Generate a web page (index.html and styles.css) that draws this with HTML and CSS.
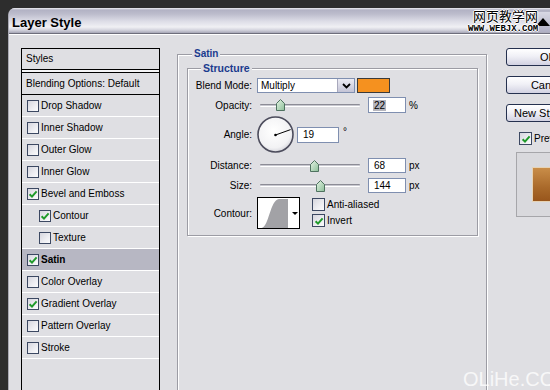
FILE: index.html
```html
<!DOCTYPE html>
<html>
<head>
<meta charset="utf-8">
<title>Layer Style</title>
<link rel="stylesheet" href="styles.css">
</head>
<body>
<div class="screen">
  <div class="window">
    <div class="titlebar"><span class="title">Layer Style</span></div>
    <div class="content">
      <div class="sidebar">
        <div class="side-head">Styles</div>
        <div class="side-blend">Blending Options: Default</div>
        <div class="side-item"><span class="cb"></span>Drop Shadow</div>
        <div class="side-item"><span class="cb"></span>Inner Shadow</div>
        <div class="side-item"><span class="cb"></span>Outer Glow</div>
        <div class="side-item"><span class="cb"></span>Inner Glow</div>
        <div class="side-item"><span class="cb"><svg viewBox="0 0 10 10" width="10" height="10"><path d="M1.6 5.2 L4 7.6 L8.6 2.4" fill="none" stroke="#1f9a2a" stroke-width="2"/></svg></span>Bevel and Emboss</div>
        <div class="side-item sub"><span class="cb"><svg viewBox="0 0 10 10" width="10" height="10"><path d="M1.6 5.2 L4 7.6 L8.6 2.4" fill="none" stroke="#1f9a2a" stroke-width="2"/></svg></span>Contour</div>
        <div class="side-item sub"><span class="cb"></span>Texture</div>
        <div class="side-item active"><span class="cb"><svg viewBox="0 0 10 10" width="10" height="10"><path d="M1.6 5.2 L4 7.6 L8.6 2.4" fill="none" stroke="#1f9a2a" stroke-width="2"/></svg></span>Satin</div>
        <div class="side-item"><span class="cb"></span>Color Overlay</div>
        <div class="side-item"><span class="cb"><svg viewBox="0 0 10 10" width="10" height="10"><path d="M1.6 5.2 L4 7.6 L8.6 2.4" fill="none" stroke="#1f9a2a" stroke-width="2"/></svg></span>Gradient Overlay</div>
        <div class="side-item"><span class="cb"></span>Pattern Overlay</div>
        <div class="side-item"><span class="cb"></span>Stroke</div>
      </div>

      <div class="main">
        <div class="group outer">
          <div class="group-title outer-title">Satin</div>
          <div class="group inner">
            <div class="group-title inner-title">Structure</div>
            <div class="form">
              <div class="row row-blend">
                <span class="lbl">Blend Mode:</span>
                <div class="select"><span class="select-text">Multiply</span><span class="select-btn"><svg viewBox="0 0 9 6" width="9" height="6"><path d="M1 1 L4.5 4.5 L8 1" fill="none" stroke="#000" stroke-width="1.8"/></svg></span></div>
                <span class="swatch"></span>
              </div>
              <div class="row row-opacity">
                <span class="lbl">Opacity:</span>
                <div class="slider"><span class="track"></span><svg class="thumb" style="left:19px" viewBox="0 0 9 12" width="9" height="12"><defs><linearGradient id="g1" x1="0" y1="0" x2="1" y2="1"><stop offset="0" stop-color="#e6f4e6"/><stop offset="1" stop-color="#8cbf98"/></linearGradient></defs><path d="M0.5 4.5 L4.5 0.5 L8.5 4.5 L8.5 11.5 L0.5 11.5 Z" fill="url(#g1)" stroke="#4f7260"/></svg></div>
                <span class="field w38"><span class="sel">22</span></span>
                <span class="unit">%</span>
              </div>
              <div class="row row-angle">
                <span class="lbl">Angle:</span>
                <svg class="dial" viewBox="0 0 37 37" width="37" height="37"><defs><radialGradient id="dg" cx="0.45" cy="0.4" r="0.6"><stop offset="0" stop-color="#ffffff"/><stop offset="0.8" stop-color="#f2f2f4"/><stop offset="1" stop-color="#d8d8de"/></radialGradient></defs><circle cx="18.5" cy="18.5" r="17.5" fill="url(#dg)" stroke="#4c4c5c" stroke-width="1.6"/><line x1="18.5" y1="19" x2="33.6" y2="13.6" stroke="#000" stroke-width="1"/><circle cx="18.5" cy="19" r="1.3" fill="#000"/></svg>
                <span class="field w42">19</span>
                <span class="unit deg">°</span>
              </div>
              <div class="row row-distance">
                <span class="lbl">Distance:</span>
                <div class="slider"><span class="track"></span><svg class="thumb" style="left:53px" viewBox="0 0 9 12" width="9" height="12"><path d="M0.5 4.5 L4.5 0.5 L8.5 4.5 L8.5 11.5 L0.5 11.5 Z" fill="url(#g1)" stroke="#4f7260"/></svg></div>
                <span class="field w38 h15">68</span>
                <span class="unit">px</span>
              </div>
              <div class="row row-size">
                <span class="lbl">Size:</span>
                <div class="slider"><span class="track"></span><svg class="thumb" style="left:59px" viewBox="0 0 9 12" width="9" height="12"><path d="M0.5 4.5 L4.5 0.5 L8.5 4.5 L8.5 11.5 L0.5 11.5 Z" fill="url(#g1)" stroke="#4f7260"/></svg></div>
                <span class="field w38 h15">144</span>
                <span class="unit">px</span>
              </div>
              <div class="row row-contour">
                <span class="lbl lbl-contour">Contour:</span>
                <div class="contour">
                  <svg viewBox="0 0 30 30" width="30" height="30"><path d="M3.5 30 C11 29 12 2 21 1 L30 1 L30 30 Z" fill="#a2a2a6"/></svg>
                  <span class="contour-arrow"></span>
                </div>
                <div class="checks">
                  <div class="check"><span class="cb cb13"></span>Anti-aliased</div>
                  <div class="check"><span class="cb cb13"><svg viewBox="0 0 10 10" width="10" height="10"><path d="M1.6 5.2 L4 7.6 L8.6 2.4" fill="none" stroke="#1f9a2a" stroke-width="2"/></svg></span>Invert</div>
                </div>
              </div>
            </div>
          </div>
        </div>
      </div>

      <div class="actions">
        <div class="btn">OK</div>
        <div class="btn">Cancel</div>
        <div class="btn btn-new">New Style...</div>
        <div class="check preview-check"><span class="cb cb13"><svg viewBox="0 0 10 10" width="10" height="10"><path d="M1.6 5.2 L4 7.6 L8.6 2.4" fill="none" stroke="#1f9a2a" stroke-width="2"/></svg></span>Preview</div>
        <div class="preview"><span class="preview-swatch"></span></div>
      </div>
    </div>
  </div>

  <div class="wm-arrow"><span class="tri"></span></div>
  <div class="wm-cn">网页教学网</div>
  <div class="wm-url">WWW.WEBJX.COM</div>
  <div class="wm-bottom">OLiHe.COM</div>
</div>
</body>
</html>
```

FILE: styles.css
```css
* { box-sizing: border-box; }
html, body { margin: 0; padding: 0; }
body {
  width: 550px;
  height: 390px;
  overflow: hidden;
  background: #2d2d2d;
  font-family: "Liberation Sans", Arial, sans-serif;
  font-size: 10px;
  color: #000;
}
.screen {
  position: relative;
  width: 550px;
  height: 390px;
  padding: 8px 0 0 8px;
}
.window {
  width: 570px;
  height: 400px;
  background: #dfdfe3;
  border-left: 1px solid #a9a9b4;
  border-top-left-radius: 7px;
  overflow: hidden;
  display: flex;
  flex-direction: column;
}
.titlebar {
  flex: none;
  height: 26px;
  border-bottom: 1px solid #6e6e7c;
  box-shadow: 0 1px 0 #ffffff;
  background: linear-gradient(to bottom, #eeeef2 0px, #b2b2c4 2px, #bcbccc 6px, #dcdce6 13px, #f0f0f4 19px, #d4d4de 22px, #a6a6b6 25px);
  padding: 3px 0 0 3px;
  display: flex;
  align-items: center;
}
.title {
  font-weight: bold;
  font-size: 13px;
}
.content {
  flex: 1;
  display: flex;
  padding: 13px 0 0 12px;
}

/* sidebar */
.sidebar {
  flex: none;
  width: 139px;
  margin-top: 1px;
  border: 1px solid #000;
  border-bottom: 0;
}
.side-head {
  height: 21px;
  line-height: 20px;
  padding-left: 4px;
  border-bottom: 1px solid #000;
  box-shadow: 0 2px 0 #f4f4f6;
}
.side-blend {
  margin-top: 2px;
  height: 23px;
  line-height: 21px;
  padding-left: 4px;
  border-top: 1px solid #000;
  border-bottom: 1px solid #000;
}
.side-item {
  height: 22px;
  border-bottom: 1px solid #ffffff;
  display: flex;
  align-items: center;
  padding-left: 5px;
}
.side-item.sub { padding-left: 17px; }
.side-item.active {
  background: #b7b7c3;
  font-weight: bold;
}
.cb {
  flex: none;
  width: 12px;
  height: 12px;
  margin-right: 2px;
  border: 1px solid #3c4862;
  background: linear-gradient(135deg, #d6d6de 0%, #eeeef2 60%, #fbfbfc 100%);
  display: flex;
  align-items: center;
  justify-content: center;
}
.cb13 { width: 13px; height: 13px; }

/* main */
.main {
  flex: none;
  width: 310px;
  margin: 7px 0 0 17px;
  display: flex;
  flex-direction: column;
}
.group {
  border: 1px solid #9c9ca4;
  box-shadow: inset 1px 1px 0 #ffffff, 1px 1px 0 #ffffff;
}
.outer {
  flex: 1;
  padding: 0 8px 0 9px;
}
.inner {
  margin-top: 8px;
  padding: 0 0 6px 0;
}
.group-title {
  width: max-content;
  margin-top: -7px;
  padding: 0 2px;
  line-height: 12px;
  background: #dfdfe3;
  color: #1b3b8e;
  font-weight: bold;
  font-size: 10px;
}
.outer-title { margin-left: 5px; }
.inner-title { margin-left: 13px; font-size: 10.5px; }

.form {
  margin-top: 4px;
  display: flex;
  flex-direction: column;
}
.row {
  display: flex;
  align-items: center;
}
.lbl {
  flex: none;
  width: 64px;
  margin-right: 5px;
  text-align: right;
}
.row-blend { height: 15px; }
.select {
  width: 98px;
  height: 15px;
  border: 1px solid #7f8fb0;
  background: #fff;
  display: flex;
  align-items: center;
}
.select-text { padding-left: 3px; flex: 1; }
.select-btn {
  width: 17px;
  height: 13px;
  background: linear-gradient(to bottom, #ececf4, #c4c4d6);
  border-left: 1px solid #a8a8bc;
  display: flex;
  align-items: center;
  justify-content: center;
}
.swatch {
  width: 33px;
  height: 15px;
  margin-left: 2px;
  background: #f5911f;
  border: 1px solid #3a3a3a;
}
.row-opacity { margin-top: 4px; height: 16px; }
.row-angle { margin-top: 3px; height: 37px; }
.row-distance { margin-top: 5px; height: 15px; }
.row-size { margin-top: 5px; height: 15px; }
.row-contour { margin-top: 4px; align-items: flex-start; }

.slider {
  position: relative;
  flex: none;
  width: 111px;
  height: 16px;
  display: flex;
  align-items: center;
}
.track {
  margin-left: 3px;
  width: 100px;
  height: 3px;
  border-top: 1px solid #8c8c96;
  border-bottom: 1px solid #ffffff;
  background: #c8c8d0;
  border-radius: 1px;
}
.thumb {
  position: absolute;
  top: 2px;
}
.field {
  flex: none;
  height: 16px;
  border: 1px solid #7f8fb0;
  background: #fff;
  padding-left: 5px;
  display: flex;
  align-items: center;
}
.w38 { width: 38px; }
.w42 { width: 42px; margin-left: 3px; }
.h15 { height: 15px; }
.sel { background: #b5b5bd; padding: 0 1px; margin-left: -1px; }
.unit { margin-left: 3px; }
.deg { margin-left: 4px; align-self: flex-start; margin-top: 10px; }
.dial { flex: none; }
.lbl-contour { margin-top: 11px; }
.contour {
  flex: none;
  width: 43px;
  height: 32px;
  border: 1px solid #000;
  background: #fff;
  display: flex;
  align-items: center;
}
.contour svg { display: block; }
.contour-arrow {
  margin-left: 4px;
  width: 0;
  height: 0;
  border-left: 3px solid transparent;
  border-right: 3px solid transparent;
  border-top: 3px solid #000;
}
.checks {
  margin-left: 12px;
  margin-top: 1px;
  display: flex;
  flex-direction: column;
  gap: 3px;
}
.check {
  display: flex;
  align-items: center;
  height: 13px;
}

/* actions */
.actions {
  flex: none;
  width: 110px;
  margin-left: 19px;
  display: flex;
  flex-direction: column;
}
.btn {
  width: 84px;
  height: 18px;
  margin-bottom: 10px;
  border: 1px solid #25314f;
  border-radius: 3px;
  background: linear-gradient(to bottom, #ffffff 0%, #f0f0f6 45%, #d2d2e2 100%);
  font-size: 11px;
  line-height: 16px;
  text-align: center;
}
.btn:first-child { margin-top: 1px; }
.btn-new { text-align: left; padding-left: 7px; }
.preview-check {
  margin: 0 0 0 13px;
}
.preview {
  margin: 7px 0 0 10px;
  width: 80px;
  height: 65px;
  border: 1px solid #a6a6aa;
  background: #d9d9dd;
  padding: 15px 0 0 16px;
}
.preview-swatch {
  display: block;
  width: 40px;
  height: 33px;
  background: linear-gradient(to bottom, #c98d48, #a9692a 60%, #98561c);
  box-shadow: 0 0 0 1px #e6d2b4;
}

/* watermarks */
.wm-arrow {
  position: absolute;
  left: 535px;
  top: 12px;
  width: 15px;
  height: 20px;
  background: linear-gradient(to bottom, #d8d8e4, #b0b0c4);
  border-radius: 3px 0 0 3px;
  display: flex;
  align-items: center;
  justify-content: center;
}
.tri {
  width: 0;
  height: 0;
  border-left: 7px solid transparent;
  border-right: 7px solid transparent;
  border-bottom: 8px solid #000;
}
.wm-cn {
  position: absolute;
  left: 473px;
  top: 8px;
  font-family: "Noto Sans CJK SC", sans-serif;
  font-size: 13px;
  line-height: 16px;
  color: #000;
  text-shadow: 1px 0 0 #fff, -1px 0 0 #fff, 0 1px 0 #fff, 0 -1px 0 #fff;
}
.wm-url {
  position: absolute;
  left: 468px;
  top: 24px;
  font-family: "Liberation Mono", monospace;
  font-weight: bold;
  font-size: 9px;
  line-height: 10px;
  color: #000;
  text-shadow: 1px 0 0 #fff, -1px 0 0 #fff, 0 1px 0 #fff, 0 -1px 0 #fff;
}
.wm-bottom {
  position: absolute;
  left: 463px;
  top: 368px;
  font-size: 20px;
  line-height: 22px;
  color: rgba(255, 255, 255, 0.75);
}
```
